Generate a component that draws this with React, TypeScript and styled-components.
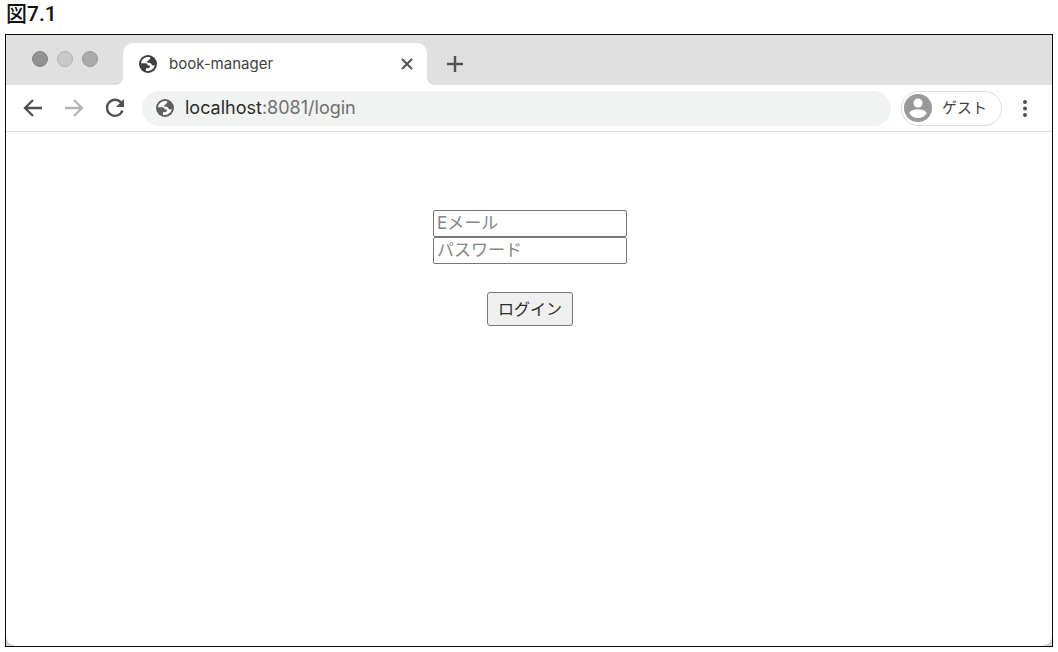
import React from "react";
import styled, { createGlobalStyle } from "styled-components";

const GlobalStyle = createGlobalStyle`
  * { box-sizing: border-box; }
  body {
    margin: 0;
    background: #fff;
    color: #3f3f3f;
    font-family: Inter, "Noto Sans CJK JP", sans-serif;
  }
  button, input { font-family: inherit; }
`;

const Figure = styled.figure`
  display: flex;
  flex-direction: column;
  min-height: 100vh;
  margin: 0;
  padding: 0 5px 5px;
`;

const Caption = styled.figcaption`
  height: 34px;
  padding-left: 1px;
  color: #111;
  font: 500 21px/28px Roboto, "Noto Sans CJK JP", sans-serif;
`;

const Browser = styled.div`
  flex: 1;
  display: flex;
  flex-direction: column;
  border: 1px solid #120a08;
  background: #d0d0d0;
`;

const TabStrip = styled.div`
  display: flex;
  align-items: flex-end;
  height: 50px;
  background: #e0e0e0;
`;

const Lights = styled.div`
  display: flex;
  align-self: center;
  gap: 9px;
  width: 109px;
  padding: 0 0 2px 26px;
`;

const Light = styled.span<{ $fill: string; $edge: string }>`
  width: 16px;
  height: 16px;
  border: 1px solid ${(p) => p.$edge};
  border-radius: 50%;
  background: ${(p) => p.$fill};
`;

const Corner = styled.span<{ $side: "left" | "right" }>`
  width: 8px;
  height: 8px;
  background: radial-gradient(circle at top ${(p) => p.$side}, transparent 8px, #fff 8px);
`;

const Tab = styled.div`
  display: flex;
  align-items: center;
  width: 304px;
  height: 42px;
  padding: 0 12px 0 16px;
  border-radius: 10px 10px 0 0;
  background: #fff;
`;

const TabTitle = styled.span`
  flex: 1;
  padding-left: 12px;
  font-size: 15px;
  line-height: 20px;
`;

const IconButton = styled.button<{ $faded?: boolean }>`
  display: flex;
  flex: none;
  padding: 0;
  border: 0;
  background: none;
  color: ${(p) => (p.$faded ? "#b5b5b5" : "#505050")};
`;

const NewTab = styled(IconButton)`
  align-self: center;
  padding: 8px 0 0 8px;
`;

const Toolbar = styled.div`
  display: flex;
  align-items: center;
  height: 47px;
  padding: 0 18px 0 16px;
  border-bottom: 1px solid #dcdcdc;
  background: #fff;
`;

const Nav = styled.div`
  display: flex;
  gap: 19px;
  margin-right: 16px;
`;

const AddressBar = styled.div`
  flex: 1;
  display: flex;
  align-items: center;
  min-width: 0;
  height: 35px;
  padding: 0 14px;
  border-radius: 18px;
  background: #f1f2f2;
  color: #606060;
`;

const Address = styled.span`
  padding-left: 11px;
  color: #707070;
  font-size: 18px;
  line-height: 24px;
`;

const Host = styled.span`
  color: #2c2c2c;
`;

const Profile = styled.button`
  display: flex;
  align-items: center;
  gap: 10px;
  height: 35px;
  margin: 0 14px 0 10px;
  padding: 0 14px 0 2px;
  border: 1px solid #dedede;
  border-radius: 18px;
  background: #fff;
  color: #3f3f3f;
  font-size: 15px;
  line-height: 20px;
`;

const Page = styled.main`
  flex: 1;
  padding-top: 78px;
  border-radius: 0 0 10px 10px;
  background: #fff;
`;

const LoginForm = styled.form`
  display: flex;
  flex-direction: column;
  align-items: center;
  padding-left: 2px;
`;

const Field = styled.input`
  width: 194px;
  height: 27px;
  padding: 0 3px 2px;
  border: 1px solid #777;
  border-radius: 2px;
  background: #fff;
  font-size: 17px;
  &::placeholder { color: #858585; opacity: 1; }
`;

const Submit = styled.button`
  width: 86px;
  height: 34px;
  margin-top: 28px;
  padding: 0 0 2px;
  border: 1px solid #777;
  border-radius: 3px;
  background: #efefef;
  color: #2c2c2c;
  font-size: 16px;
`;

const Globe = () => (
  <svg width="18" height="18" viewBox="0 0 18 18" aria-hidden="true">
    <circle cx="9" cy="9" r="9" fill="currentColor" />
    <path
      d="M11 2.200C7 .9 2.500 3.700 2 8.200h3.600c2.200 0 3 .8 3.200 2.300h2c.6 1.800-.6 2.800-2.300 2.800H7v2.400c4 1.100 8-1.500 8.800-5.700-.9.800-2.800.6-3.400-.8-.5-1.200-1.400-1.500-3.200-1.500-1.300 0-1.400-2.100.2-2.300 1.500-.2.800-1.900 2.100-2.200z"
      fill="#fff"
    />
  </svg>
);

const Line = ({ d, size = 22, width = 2 }: { d: string; size?: number; width?: number }) => (
  <svg width={size} height={size} viewBox={`0 0 ${size} ${size}`} fill="none" stroke="currentColor" strokeWidth={width} aria-hidden="true">
    <path d={d} />
  </svg>
);

export default function App() {
  return (
    <>
      <GlobalStyle />
      <Figure>
        <Caption>図7.1</Caption>
        <Browser>
          <TabStrip>
            <Lights>
              <Light $fill="#929292" $edge="#828282" />
              <Light $fill="#c9c9c9" $edge="#b2b2b2" />
              <Light $fill="#aaa" $edge="#969696" />
            </Lights>
            <Corner $side="left" />
            <Tab>
              <Globe />
              <TabTitle>book-manager</TabTitle>
              <IconButton aria-label="タブを閉じる">
                <Line size={16} d="M3 3l10 10M13 3L3 13" />
              </IconButton>
            </Tab>
            <Corner $side="right" />
            <NewTab aria-label="新しいタブ">
              <Line size={24} width={2.5} d="M12 4v16M4 12h16" />
            </NewTab>
          </TabStrip>
          <Toolbar>
            <Nav>
              <IconButton aria-label="戻る">
                <Line width={2.3} d="M20 11H3M11 3l-8 8 8 8" />
              </IconButton>
              <IconButton aria-label="進む" $faded>
                <Line width={2.3} d="M2 11h17M11 3l8 8-8 8" />
              </IconButton>
              <IconButton aria-label="再読み込み">
                <svg width="22" height="22" viewBox="0 0 22 22" aria-hidden="true">
                  <path d="M18.5 13.500A8 8 0 1 1 17 5.500" fill="none" stroke="currentColor" strokeWidth="2.300" />
                  <path d="M20 2v8h-8z" fill="currentColor" />
                </svg>
              </IconButton>
            </Nav>
            <AddressBar>
              <Globe />
              <Address><Host>localhost</Host>:8081/login</Address>
            </AddressBar>
            <Profile>
              <svg width="28" height="28" viewBox="0 0 28 28" aria-hidden="true">
                <circle cx="14" cy="14" r="14" fill="#999" />
                <circle cx="14" cy="9" r="4.500" fill="#fff" />
                <path d="M5.500 19.500c0-2.800 4-4 8.500-4s8.500 1.200 8.500 4c-2 3-5 4.500-8.500 4.500s-6.500-1.500-8.500-4.500z" fill="#fff" />
              </svg>
              ゲスト
            </Profile>
            <IconButton aria-label="メニュー">
              <svg width="18" height="22" viewBox="0 0 18 22" fill="currentColor" aria-hidden="true">
                <circle cx="9" cy="5" r="2" />
                <circle cx="9" cy="11.500" r="2" />
                <circle cx="9" cy="18" r="2" />
              </svg>
            </IconButton>
          </Toolbar>
          <Page>
            <LoginForm>
              <Field type="email" placeholder="Eメール" aria-label="Eメール" />
              <Field type="password" placeholder="パスワード" aria-label="パスワード" />
              <Submit type="button">ログイン</Submit>
            </LoginForm>
          </Page>
        </Browser>
      </Figure>
    </>
  );
}
